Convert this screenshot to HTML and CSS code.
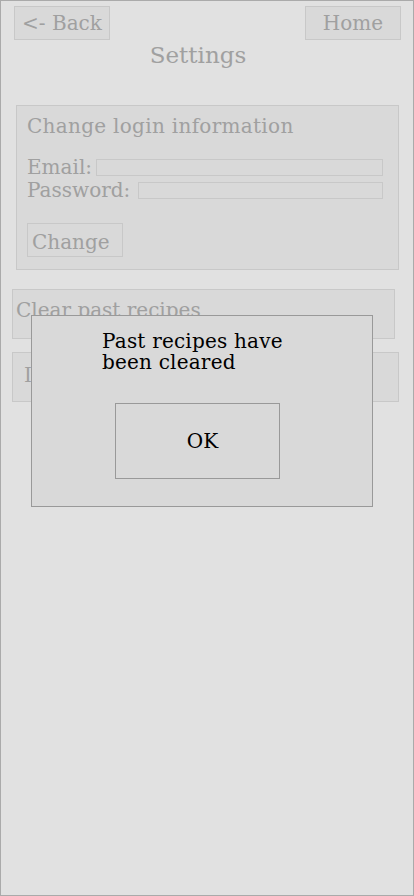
FILE: index.html
```html
<!DOCTYPE html>
<html>
<head>
<meta charset="utf-8">
<link rel="stylesheet" href="styles.css">
</head>
<body>
<div class="frame">
  <div class="topbar">
    <div class="navbtn">&lt;- Back</div>
    <div class="navbtn">Home</div>
  </div>
  <div class="title">Settings</div>
  <div class="card">
    <div class="card-title">Change login information</div>
    <div class="row email"><span class="lbl">Email:</span><span class="field"></span></div>
    <div class="row pass"><span class="lbl">Password:</span><span class="field"></span></div>
    <div class="changebtn">Change</div>
  </div>
  <div class="item clear">Clear past recipes</div>
  <div class="item other">Import recipes</div>

  <div class="modal">
    <div class="msg">Past recipes have<br>been cleared</div>
    <div class="okbtn">OK</div>
  </div>
</div>
</body>
</html>
```
FILE: styles.css
```css
* { box-sizing: border-box; }
body {
  margin: 0;
  background: #e1e1e1;
  font-family: "DejaVu Serif", "Liberation Serif", serif;
}
.frame {
  position: relative;
  width: 414px;
  height: 896px;
  border: 1px solid #aaaaaa;
  background: #e1e1e1;
  color: #a0a0a0;
  overflow: hidden;
}
.topbar {
  display: flex;
  justify-content: space-between;
  padding: 5px 12px 0 13px;
}
.navbtn {
  width: 96px;
  height: 34px;
  background: #d9d9d9;
  border: 1px solid #c8c8c8;
  font-size: 20px;
  line-height: 32px;
  text-align: center;
}
.title {
  text-align: center;
  padding-right: 18px;
  font-size: 23px;
  line-height: 28px;
  margin-top: 1px;
}
.card {
  margin: 36px 0 0 15px;
  width: 383px;
  height: 165px;
  background: #d9d9d9;
  border: 1px solid #c8c8c8;
  padding: 8px 15px 0 10px;
}
.card-title {
  font-size: 20px;
  line-height: 24px;
  letter-spacing: 0.3px;
}
.row {
  display: flex;
  align-items: center;
  font-size: 20px;
  line-height: 22px;
}
.email { margin-top: 18px; }
.pass { margin-top: 1px; }
.lbl { white-space: nowrap; }
.field {
  flex: 1;
  height: 17px;
  border: 1px solid #c8c8c8;
  margin-left: 4px;
}
.pass .field { margin-left: 8px; }
.changebtn {
  margin-top: 22px;
  width: 96px;
  height: 34px;
  border: 1px solid #c8c8c8;
  font-size: 20px;
  line-height: 36px;
  padding-left: 4px;
}
.item {
  margin-left: 11px;
  height: 50px;
  background: #d9d9d9;
  border: 1px solid #c8c8c8;
  font-size: 20px;
  line-height: 40px;
  padding-left: 3px;
}
.clear { margin-top: 19px; width: 383px; }
.other { margin-top: 13px; width: 387px; padding-left: 11px; line-height: 44px; }
.modal {
  position: absolute;
  left: 30px;
  top: 314px;
  width: 342px;
  height: 192px;
  background: #d9d9d9;
  border: 1px solid #999999;
  color: #000;
}
.msg {
  position: absolute;
  left: 70px;
  top: 15px;
  font-size: 20px;
  line-height: 21px;
  letter-spacing: 0.2px;
}
.okbtn {
  position: absolute;
  left: 83px;
  top: 87px;
  width: 165px;
  height: 76px;
  border: 1px solid #999999;
  font-size: 20px;
  line-height: 74px;
  text-align: center;
  padding-left: 10px;
}
```
